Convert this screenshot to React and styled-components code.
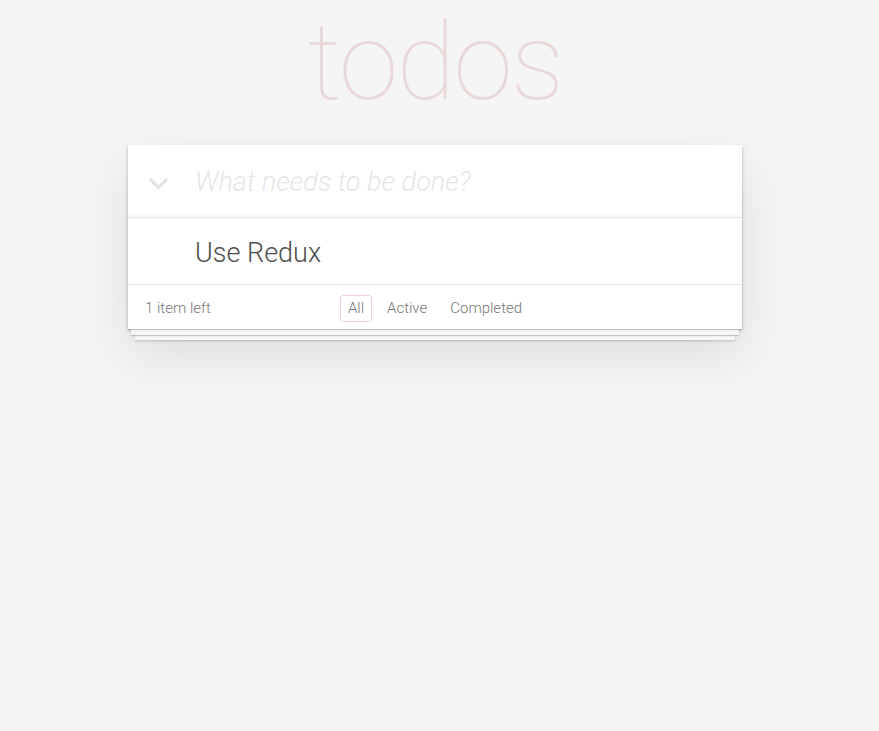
import React from "react";
import styled, { createGlobalStyle } from "styled-components";

const GlobalStyle = createGlobalStyle`
  html, body {
    margin: 0;
    padding: 0;
  }
  body {
    background: #f5f5f5;
    font-family: Roboto, "Helvetica Neue", Helvetica, Arial, sans-serif;
    font-weight: 300;
    color: #4d4d4d;
    -webkit-font-smoothing: antialiased;
  }
`;

const Page = styled.div`
  width: 614px;
  min-height: 100vh;
  margin: 0 auto;
  padding-right: 9px;
`;

const Header = styled.header`
  height: 145px;
  box-sizing: border-box;
  padding-top: 8px;
  text-align: center;
`;

const Title = styled.h1`
  margin: 0;
  font-size: 108px;
  line-height: 1;
  letter-spacing: -2px;
  font-weight: 100;
  color: rgba(175, 47, 47, 0.15);
  text-rendering: optimizeLegibility;
`;

const Panel = styled.section`
  background: #fff;
  box-shadow: 0 1px 1px rgba(0, 0, 0, 0.2), 0 9px 0 -3px #f6f6f6,
    0 10px 1px -3px rgba(0, 0, 0, 0.2), 0 18px 0 -7px #f6f6f6,
    0 19px 2px -7px rgba(0, 0, 0, 0.2), 0 2px 4px 0 rgba(0, 0, 0, 0.2),
    0 25px 50px 0 rgba(0, 0, 0, 0.1);
`;

const NewRow = styled.div`
  display: flex;
  align-items: center;
  height: 72px;
  box-shadow: inset 0 -2px 1px rgba(0, 0, 0, 0.03);
`;

const ToggleCell = styled.div`
  width: 67px;
  box-sizing: border-box;
  padding-left: 21px;
  padding-top: 5px;
  display: flex;
  align-items: center;
`;

const NewInput = styled.input`
  flex: 1;
  border: none;
  outline: none;
  background: transparent;
  padding: 2px 0 0;
  margin: 0;
  font-family: inherit;
  font-size: 27px;
  font-weight: 300;
  color: #4d4d4d;

  &::placeholder {
    font-style: italic;
    font-weight: 300;
    color: #e6e6e6;
  }
`;

const List = styled.ul`
  margin: 0;
  padding: 0;
  list-style: none;
  border-top: 1px solid #e6e6e6;
`;

const Item = styled.li`
  display: flex;
  align-items: center;
  font-size: 27px;
  border-bottom: 1px solid #ededed;

  &:last-child {
    border-bottom: none;
  }
`;

const ItemLabel = styled.label`
  display: block;
  padding: 19px 17px 15px 67px;
  line-height: 32px;
  color: #4d4d4d;
  word-break: break-all;
`;

const Footer = styled.footer`
  display: grid;
  grid-template-columns: 1fr auto 1fr;
  align-items: center;
  height: 45px;
  box-sizing: border-box;
  padding: 2px 17px 0;
  border-top: 1px solid #e6e6e6;
  color: #777;
  font-size: 15px;
`;

const Count = styled.span`
  justify-self: start;
`;

const Filters = styled.ul`
  display: flex;
  margin: 0;
  padding: 0;
  list-style: none;
`;

const FilterLink = styled.a`
  display: block;
  margin: 3px 3.5px;
  padding: 3px 7px;
  line-height: 19px;
  color: inherit;
  text-decoration: none;
  border: 1px solid ${(p) => (p.$selected ? "rgba(175, 47, 47, 0.2)" : "transparent")};
  border-radius: 3px;
  cursor: pointer;
`;

const Chevron = () => (
  <svg width="19" height="12" viewBox="0 0 19 12">
    <polyline
      points="2,2 9.5,9.5 17,2"
      fill="none"
      stroke="#e4e4e4"
      strokeWidth="3.2"
      strokeLinecap="round"
      strokeLinejoin="round"
    />
  </svg>
);

const filters = ["All", "Active", "Completed"];

const App = () => (
  <>
    <GlobalStyle />
    <Page>
      <Header>
        <Title>todos</Title>
      </Header>
      <Panel>
        <NewRow>
          <ToggleCell>
            <Chevron />
          </ToggleCell>
          <NewInput placeholder="What needs to be done?" />
        </NewRow>
        <List>
          <Item>
            <ItemLabel>Use Redux</ItemLabel>
          </Item>
        </List>
        <Footer>
          <Count>1 item left</Count>
          <Filters>
            {filters.map((f) => (
              <li key={f}>
                <FilterLink $selected={f === "All"}>{f}</FilterLink>
              </li>
            ))}
          </Filters>
          <span />
        </Footer>
      </Panel>
    </Page>
  </>
);

export default App;
